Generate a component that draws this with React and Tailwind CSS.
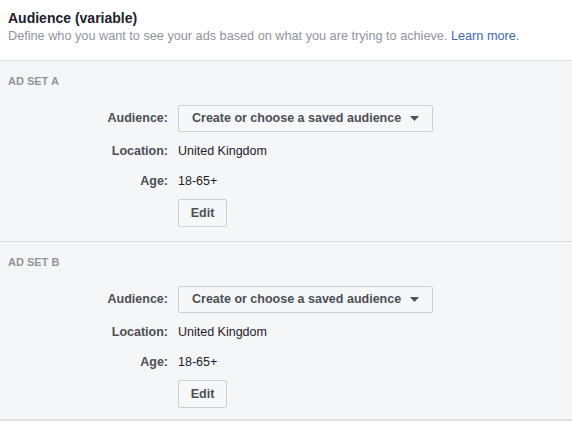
import React from 'react';

const adSets = [
  { nombre: 'AD SET A', location: 'United Kingdom', age: '18-65+' },
  { nombre: 'AD SET B', location: 'United Kingdom', age: '18-65+' },
];

function Row({ label, children, className = '' }) {
  return (
    <div className={`flex items-center ${className}`}>
      <div className="w-[168px] text-right text-[12.5px] font-bold text-[#4b4f56]">{label}</div>
      <div className="ml-[10px] text-[12.5px] text-[#1d2129]">{children}</div>
    </div>
  );
}

function AdSet({ set, last }) {
  return (
    <div className={`bg-[#f5f6f7] pt-[12px] ${last ? 'pb-[11px] border-b-2' : 'pb-[14px] border-b'} border-[#dddfe2]`}>
      <div className="pl-[8px] text-[11px] leading-[16px] font-bold text-[#90949c]">{set.nombre}</div>

      {/* Audiencia */}
      <Row label="Audience:" className="mt-[16px]">
        <button className="flex items-center justify-between w-[255px] h-[27px] pl-[13px] pr-[13px] bg-[#f6f7f9] border border-[#ced0d4] rounded-[2px] font-bold text-[#4b4f56] leading-none">
          <span>Create or choose a saved audience</span>
          <svg width="9" height="5" viewBox="0 0 9 5" className="ml-[8px]">
            <path d="M0 0 L9 0 L4.5 5 Z" fill="#4b4f56" />
          </svg>
        </button>
      </Row>

      <Row label="Location:" className="mt-[10px] h-[18px]">{set.location}</Row>
      <Row label="Age:" className="mt-[12px] h-[18px]">{set.age}</Row>

      <div className="mt-[9px] ml-[178px]">
        <button className="w-[49px] h-[28px] bg-[#f6f7f9] border border-[#ced0d4] rounded-[2px] text-[12.5px] font-bold text-[#4b4f56]">
          Edit
        </button>
      </div>
    </div>
  );
}

export default function App() {
  return (
    <div className="w-[572px] h-[422px] overflow-hidden bg-white" style={{ fontFamily: '"Liberation Sans", Arial, sans-serif' }}>
      <div className="h-[61px] pl-[8px] pt-[9px] border-b border-[#dddfe2]">
        <h2 className="text-[14px] leading-[18px] font-bold text-[#1d2129]">Audience (variable)</h2>
        <p className="mt-[1px] text-[12.7px] leading-[16px] text-[#90949c]">
          Define who you want to see your ads based on what you are trying to achieve.{' '}
          <a href="#" className="text-[#4267b2]">Learn more.</a>
        </p>
      </div>

      {adSets.map((s, i) => (
        <AdSet key={s.nombre} set={s} last={i === adSets.length - 1} />
      ))}
    </div>
  );
}
